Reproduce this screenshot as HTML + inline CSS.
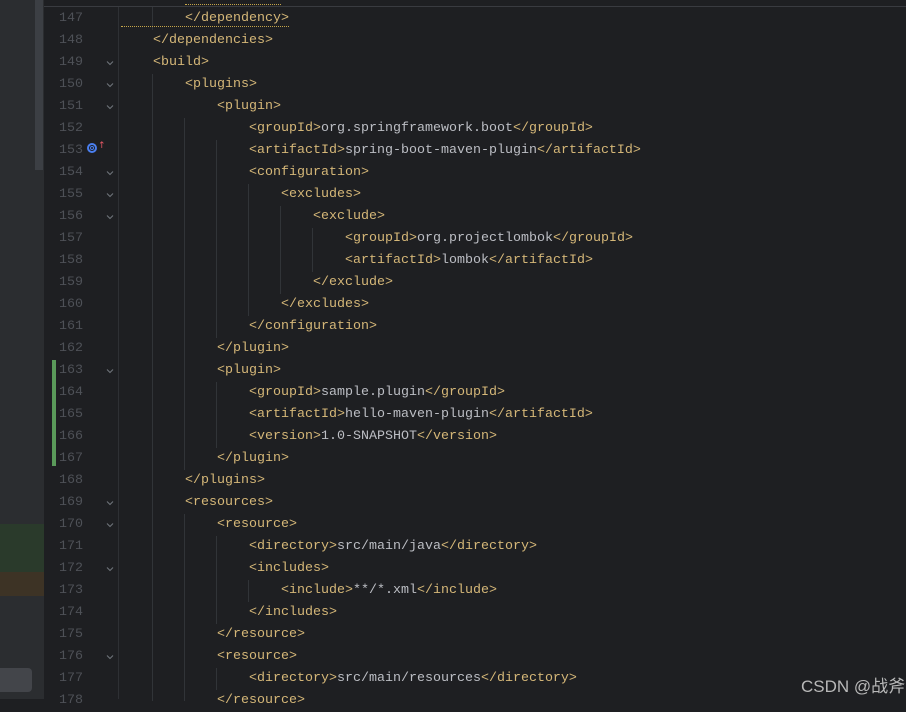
<!DOCTYPE html>
<html><head><meta charset="utf-8"><style>
body{margin:0;width:906px;height:699px;overflow:hidden;background:#1e1f22;position:relative;font-family:"Liberation Mono",monospace;}
.l{position:absolute;left:0;height:22px;line-height:22px;font-size:13.33px;white-space:pre;}
.n{position:absolute;width:83px;left:0;text-align:right;color:#4e5157;}
.c{position:absolute;color:#bcbec4;}
.t{color:#d5b778}
.g{position:absolute;width:1px;background:#313438}
.f{position:absolute;left:105px;width:10px;height:22px;}
</style></head><body>
<div style="position:absolute;left:0;top:0;width:44px;height:699px;background:#2b2d30"></div>
<div style="position:absolute;left:35px;top:0;width:8px;height:170px;background:#3c3f44"></div>
<div style="position:absolute;left:0;top:524px;width:44px;height:48px;background:#2a3a2b"></div>
<div style="position:absolute;left:0;top:572px;width:44px;height:24px;background:#3d3325"></div>
<div style="position:absolute;left:0;top:668px;width:32px;height:24px;background:#43454a;border-radius:0 4px 4px 0"></div>
<div style="position:absolute;left:44px;top:0;width:862px;height:6px;background:#1e1f22;border-bottom:1px solid #393b40"></div>
<div style="position:absolute;left:52px;top:360px;width:4px;height:106px;background:#5a9a5a"></div>
<div class="g" style="left:118px;top:7px;height:692px;background:#2e3034"></div>
<div class="g" style="left:152px;top:7px;height:23px"></div>
<div class="g" style="left:152px;top:74px;height:627px"></div>
<div class="g" style="left:184px;top:118px;height:352px"></div>
<div class="g" style="left:184px;top:514px;height:187px"></div>
<div class="g" style="left:216px;top:140px;height:198px"></div>
<div class="g" style="left:216px;top:382px;height:66px"></div>
<div class="g" style="left:216px;top:536px;height:88px"></div>
<div class="g" style="left:216px;top:668px;height:22px"></div>
<div class="g" style="left:248px;top:184px;height:132px"></div>
<div class="g" style="left:248px;top:580px;height:22px"></div>
<div class="g" style="left:280px;top:206px;height:88px"></div>
<div class="g" style="left:312px;top:228px;height:44px"></div>
<div style="position:absolute;left:121px;top:23px;width:168px;height:3px;border-bottom:1px dotted #c5a54a"></div>
<div style="position:absolute;left:185px;top:1px;width:96px;height:3px;border-bottom:1px dotted #c5a54a"></div>
<div id="code"></div>
<div style="position:absolute;left:87px;top:143px;width:10px;height:10px;border:2px solid #4a7ff0;border-radius:50%;box-sizing:border-box"></div>
<div style="position:absolute;left:90px;top:146px;width:4px;height:4px;border:1px solid #4a7ff0;border-radius:50%;box-sizing:border-box"></div>
<div style="position:absolute;left:98px;top:141px;color:#e55765;font-size:9px;font-family:'DejaVu Sans'">↑</div>
<div style="position:absolute;left:801px;top:672px;color:#b8b8b8;font-size:17px;font-family:'Liberation Sans','Noto Sans CJK SC',sans-serif">CSDN @战斧</div>
<script>
var L=[[2,'</dependency>'],[1,'</dependencies>'],[1,'<build>',1],[2,'<plugins>',1],[3,'<plugin>',1],
[4,'<groupId>','org.springframework.boot','</groupId>'],[4,'<artifactId>','spring-boot-maven-plugin','</artifactId>'],
[4,'<configuration>',1],[5,'<excludes>',1],[6,'<exclude>',1],[7,'<groupId>','org.projectlombok','</groupId>'],
[7,'<artifactId>','lombok','</artifactId>'],[6,'</exclude>'],[5,'</excludes>'],[4,'</configuration>'],[3,'</plugin>'],
[3,'<plugin>',1],[4,'<groupId>','sample.plugin','</groupId>'],[4,'<artifactId>','hello-maven-plugin','</artifactId>'],
[4,'<version>','1.0-SNAPSHOT','</version>'],[3,'</plugin>'],[2,'</plugins>'],[2,'<resources>',1],[3,'<resource>',1],
[4,'<directory>','src/main/java','</directory>'],[4,'<includes>',1],[5,'<include>','**/*.xml','</include>'],[4,'</includes>'],
[3,'</resource>'],[3,'<resource>',1],[4,'<directory>','src/main/resources','</directory>'],[3,'</resource>']];
var h='';
L.forEach(function(a,i){var y=8+22*i;
h+='<div class="l" style="top:'+y+'px;width:906px"><span class="n">'+(147+i)+'</span>';
if(a[2]===1)h+='<svg class="f" style="top:0" viewBox="0 0 10 22"><path d="M2 9.5l3 3 3-3" stroke="#6f737a" fill="none" stroke-width="1.1"/></svg>';
var e=function(s){return s.replace(/</g,'&lt;').replace(/>/g,'&gt;')};
var c='<span class="t">'+e(a[1])+'</span>';
if(typeof a[2]==='string')c+=e(a[2])+'<span class="t">'+e(a[3])+'</span>';
h+='<span class="c" style="left:'+(121+32*a[0])+'px">'+c+'</span></div>';});
document.getElementById('code').innerHTML=h;
</script>
</body></html>
